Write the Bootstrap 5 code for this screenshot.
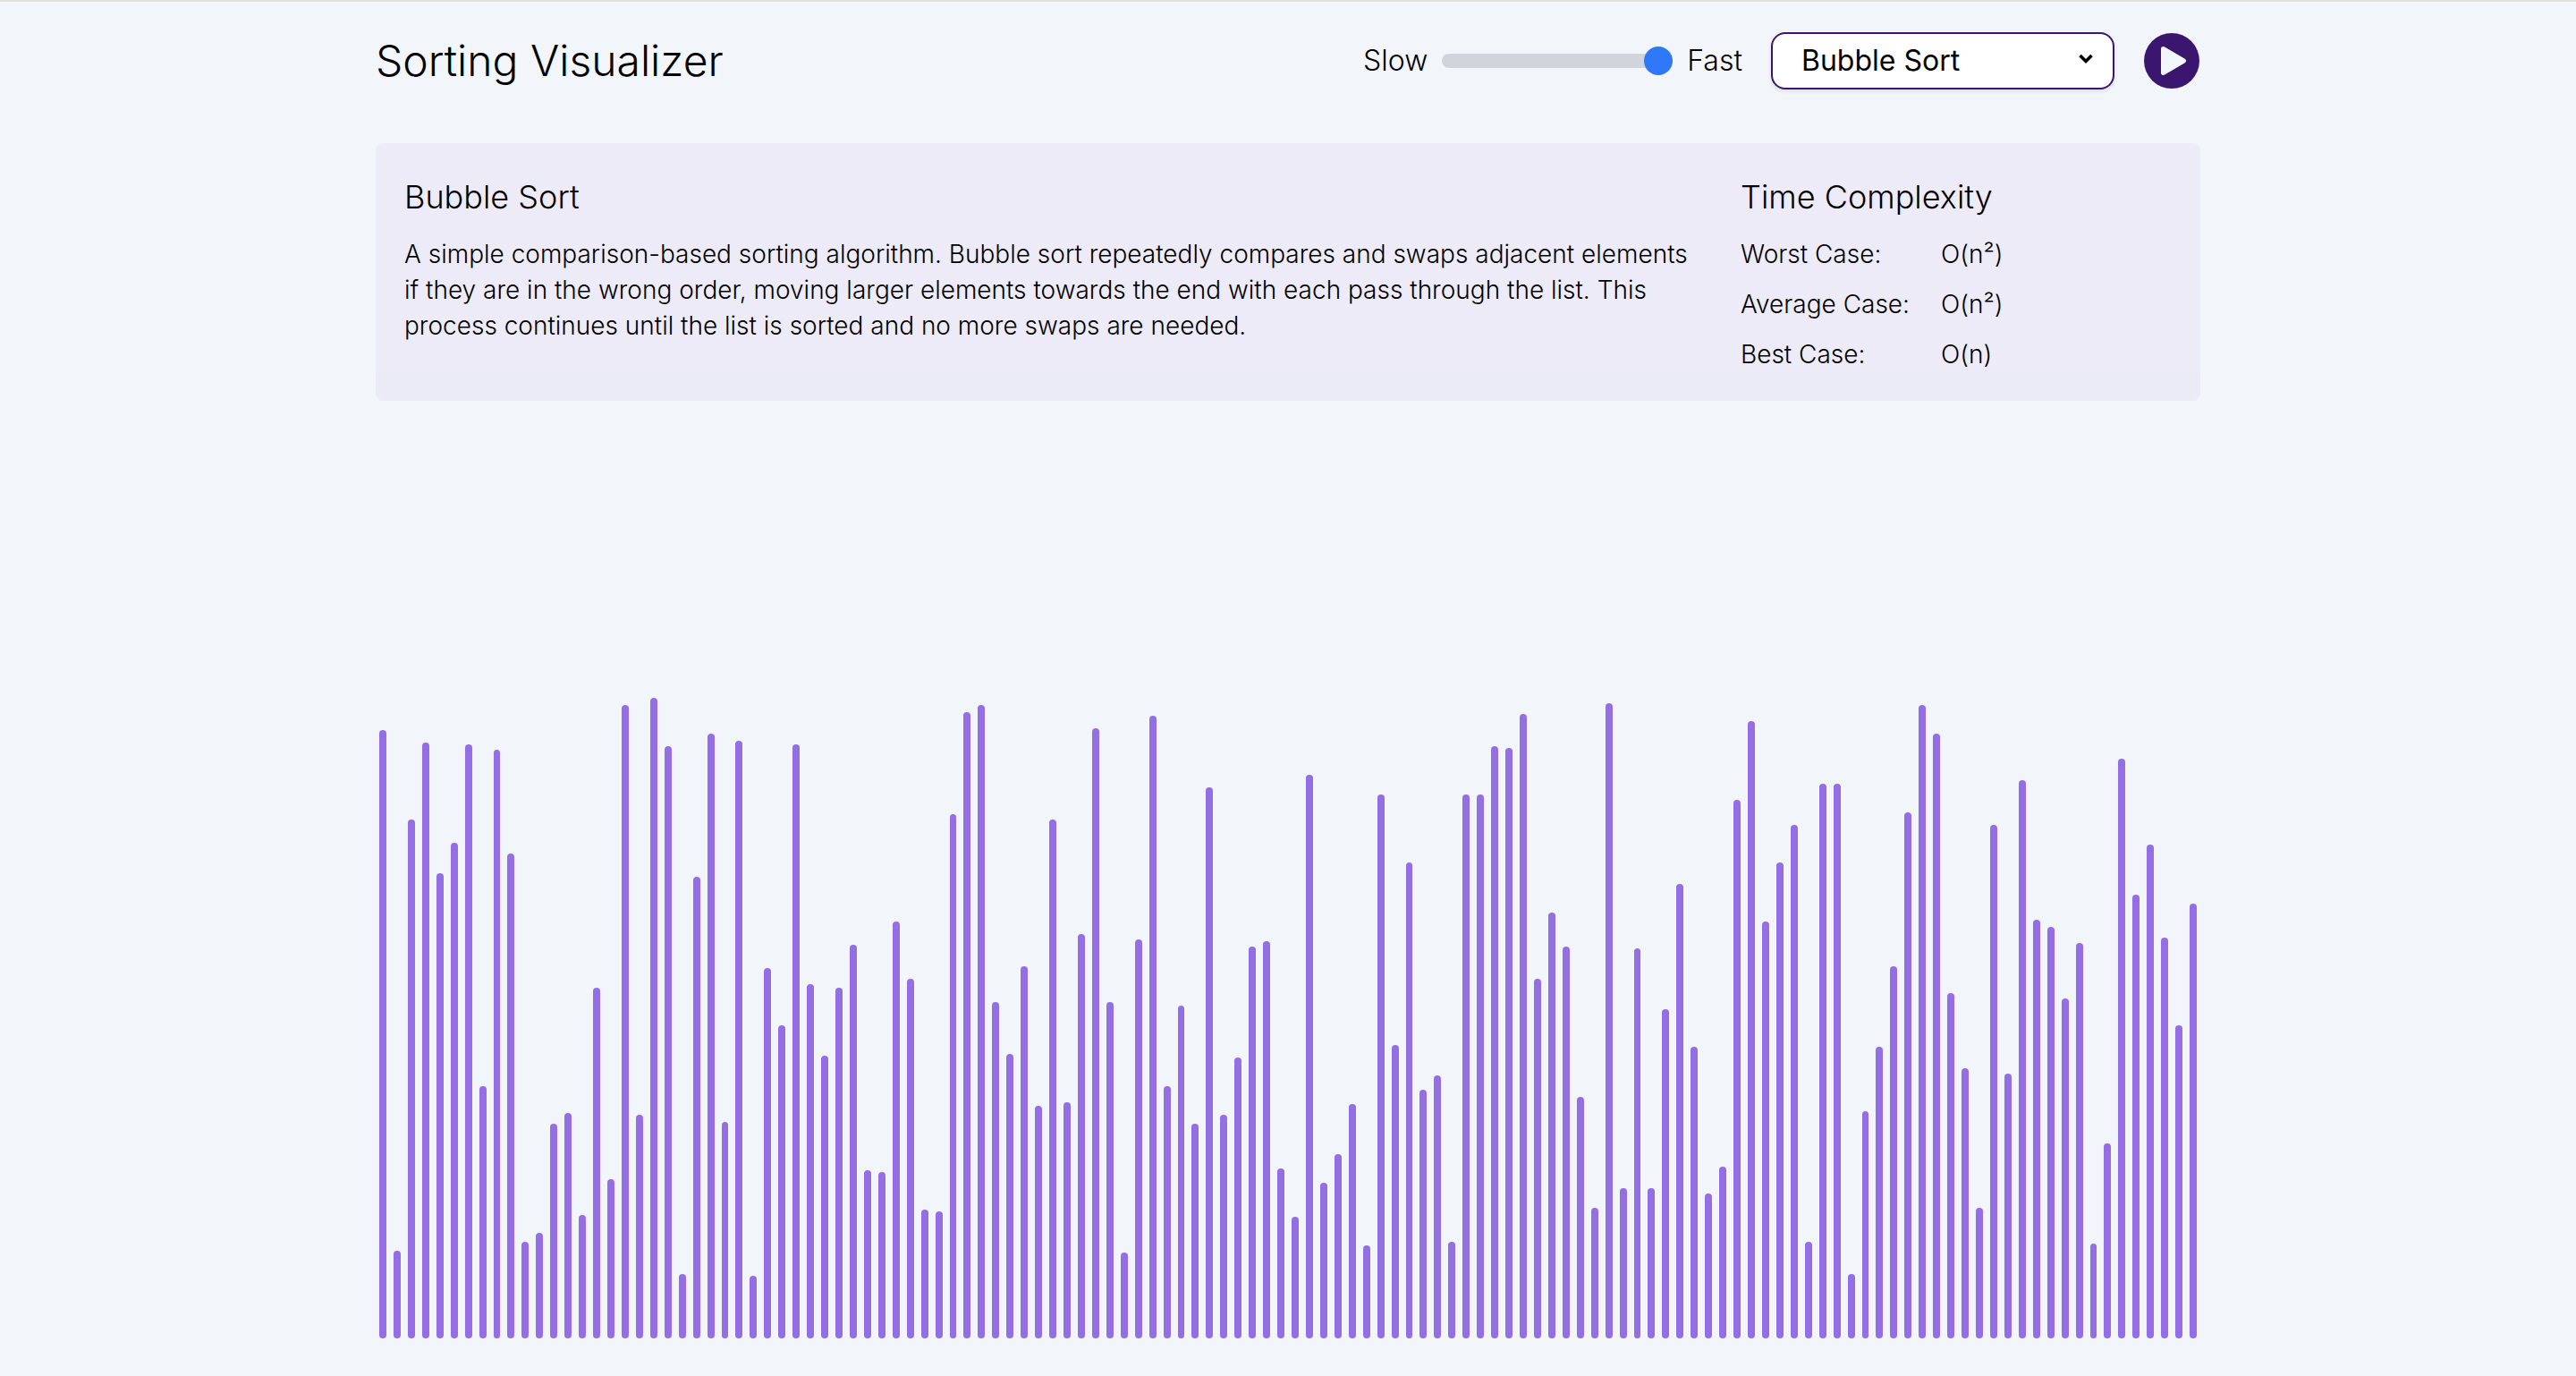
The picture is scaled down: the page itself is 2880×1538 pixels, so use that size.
<!DOCTYPE html>
<html lang="en">
<head>
<meta charset="utf-8">
<meta name="viewport" content="width=device-width, initial-scale=1">
<title>Sorting Visualizer</title>
<link href="https://cdn.jsdelivr.net/npm/bootstrap@5.3.0/dist/css/bootstrap.min.css" rel="stylesheet">
<style>
  :root { --ink: #3b166f; --bar: #936ee4; --page: #f2f5fa; --light: 330; }
  body {
    background: var(--page);
    border-top: 2px solid #e0e0e0;
    color: #000;
    font-family: Inter, "Liberation Sans", sans-serif;
    font-size: 28px;
    font-weight: var(--light);
    line-height: 40px;
  }
  .shell { width: 100%; max-width: 2104px; padding: 34px 32px 42px; }
  .page-title { font-size: 48px; line-height: 64px; font-weight: var(--light); }
  .toolbar { gap: 32px; font-size: 32px; }
  .speed { gap: 16px; }
  .speed-range { width: 258px; height: 32px; }
  .speed-range::-webkit-slider-runnable-track { height: 16px; border-radius: 8px; background: #d1d5db; }
  .speed-range::-webkit-slider-thumb { width: 32px; height: 32px; margin-top: -8px; background: #2f78f7; border: 0; box-shadow: none; }
  .speed-range::-moz-range-track { height: 16px; border-radius: 8px; background: #d1d5db; }
  .speed-range::-moz-range-thumb { width: 32px; height: 32px; background: #2f78f7; border: 0; }
  .algo-select {
    --bs-form-select-bg-img: url("data:image/svg+xml,%3Csvg xmlns='http://www.w3.org/2000/svg' viewBox='0 0 16 12'%3E%3Cpath d='M1.5 2 8 8.500 14.500 2' fill='none' stroke='%23000' stroke-width='3.600'/%3E%3C/svg%3E");
    width: 384px; height: 64px;
    padding: 0 64px 0 32px;
    border: 2px solid var(--ink);
    border-radius: 16px;
    background-color: #fff;
    background-image: var(--bs-form-select-bg-img);
    background-position: right 22px top 22px;
    background-size: 16px 12px;
    box-shadow: 0 2px 4px rgba(0, 0, 0, .1);
    color: #000;
    font-size: 32px;
    line-height: 40px;
  }
  .play-btn { width: 64px; height: 64px; line-height: 0; }
  .info-panel {
    margin-top: 60px;
    padding: 32px;
    border-radius: 8px;
    background: linear-gradient(to top, #ebebf7 31px, #eeebf8 31px);
    display: grid;
    grid-template-columns: 3fr 1fr;
    column-gap: 48px;
  }
  .panel-title { font-size: 36px; line-height: 56px; font-weight: var(--light); margin-bottom: 16px; }
  .cases th { font-weight: var(--light); width: 224px; }
  .cases th, .cases td { padding: 0 0 16px; }
  .cases tr:last-child > * { padding-bottom: 0; }
  .chart-bar { flex: 1 1 0; margin: 0 4px; border-radius: 4px; background: var(--bar); }
</style>
<script src="https://cdn.jsdelivr.net/npm/bootstrap@5.3.0/dist/js/bootstrap.bundle.min.js" defer></script>
</head>
<body class="min-vh-100 d-flex flex-column">
<div class="shell mx-auto flex-grow-1 d-flex flex-column">
  <header class="d-flex align-items-center justify-content-between">
    <h1 class="page-title m-0">Sorting Visualizer</h1>
    <div class="toolbar d-flex align-items-center">
      <div class="speed d-flex align-items-center">
        <label for="speed">Slow</label>
        <input type="range" class="form-range speed-range" id="speed" min="0" max="100" value="100">
        <label for="speed">Fast</label>
      </div>
      <select class="form-select algo-select" id="algorithm" aria-label="Algorithm">
        <option selected>Bubble Sort</option>
        <option>Insertion Sort</option>
        <option>Selection Sort</option>
        <option>Merge Sort</option>
        <option>Quick Sort</option>
      </select>
      <button type="button" class="play-btn btn p-0 border-0 rounded-circle" aria-label="Play">
        <svg width="64" height="64" viewBox="0 0 64 64" aria-hidden="true">
          <circle cx="32" cy="32" r="31" fill="#3b166f"/>
          <path d="M22.500 18.500 45.500 32 22.500 45.500Z" fill="#f2f5fa" stroke="#f2f5fa" stroke-width="5" stroke-linejoin="round"/>
        </svg>
      </button>
    </div>
  </header>

  <section class="info-panel">
    <div>
      <h2 class="panel-title">Bubble Sort</h2>
      <p class="m-0">A simple comparison-based sorting algorithm. Bubble sort repeatedly compares and swaps adjacent elements if they are in the wrong order, moving larger elements towards the end with each pass through the list. This process continues until the list is sorted and no more swaps are needed.</p>
    </div>
    <div>
      <h2 class="panel-title">Time Complexity</h2>
      <table class="cases">
        <tbody>
          <tr><th scope="row">Worst Case:</th><td>O(n²)</td></tr>
          <tr><th scope="row">Average Case:</th><td>O(n²)</td></tr>
          <tr><th scope="row">Best Case:</th><td>O(n)</td></tr>
        </tbody>
      </table>
    </div>
  </section>

  <div class="d-flex align-items-end flex-grow-1" id="chart" role="img" aria-label="Values to sort"></div>
</div>
<script>
  const values = [
    340,49,290,333,260,277,332,141,329,271,54,59,120,126,69,196,89,354,125,358,331,36,258,338,121,334,
    35,207,175,332,198,158,196,220,94,93,233,201,72,71,293,350,354,188,159,208,130,290,132,226,341,
    188,48,223,348,141,186,120,308,125,157,219,222,95,68,315,87,103,131,52,304,164,266,139,147,54,304,
    304,331,330,349,201,238,219,135,73,355,84,218,84,184,254,163,81,96,301,345,233,266,287,54,310,310,
    36,127,163,208,294,354,338,193,151,73,287,148,312,234,230,190,221,53,109,324,248,276,224,175,243
  ];
  const chart = document.getElementById('chart');
  for (const value of values) {
    const bar = document.createElement('div');
    bar.className = 'chart-bar';
    bar.style.height = value * 2 + 'px';
    chart.append(bar);
  }
</script>
</body>
</html>
